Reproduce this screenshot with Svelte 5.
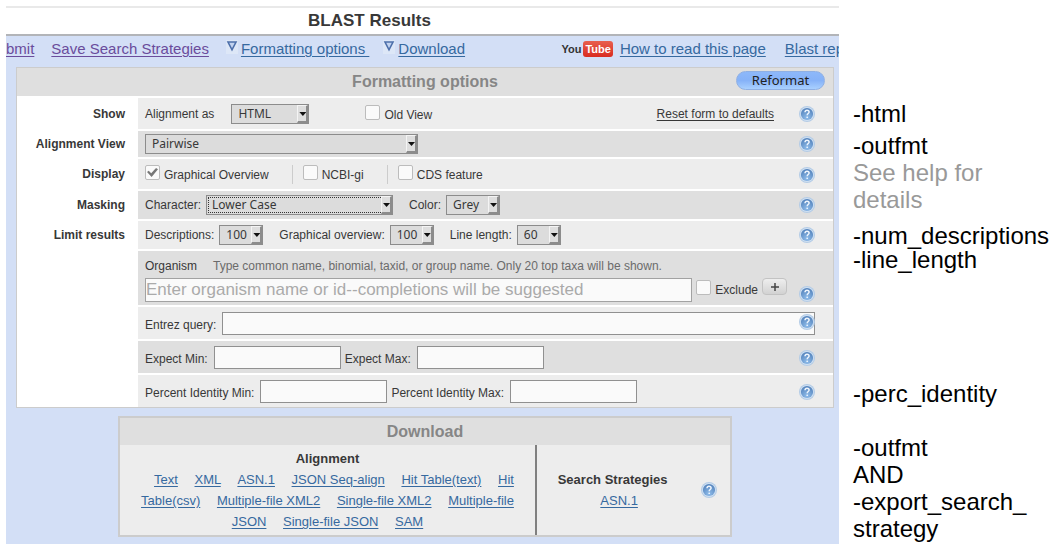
<script>
  let descriptions = $state('100');
  let overview = $state('100');
  let lineLength = $state('60');

  const alignmentFormats = ['Text', 'XML', 'ASN.1', 'JSON Seq-align', 'Hit Table(text)', 'Hit Table(csv)', 'Multiple-file XML2', 'Single-file XML2', 'Multiple-file JSON', 'Single-file JSON', 'SAM'];
</script>

{#snippet help()}
  <button type="button" class="help" aria-label="Help">
    <svg viewBox="0 0 16 16" width="16" height="16" aria-hidden="true">
      <defs>
        <radialGradient id="orb" cx="50%" cy="80%" r="75%">
          <stop offset="0" stop-color="#8fbcea" />
          <stop offset="1" stop-color="#5584bd" />
        </radialGradient>
      </defs>
      <circle cx="8" cy="8" r="8" fill="#b4cce6" />
      <circle cx="8" cy="8" r="7" fill="#cfe0f2" />
      <circle cx="8" cy="8" r="6.1" fill="url(#orb)" />
      <path d="M6 6.2C6.1 4.9 6.9 4.3 8 4.3s2.1.7 2.1 1.8c0 1.4-1.9 1.5-1.9 3.1" fill="none" stroke="#eef5fd" stroke-width="1.5" />
      <rect x="7.4" y="10.4" width="1.6" height="1.6" rx=".6" fill="#eef5fd" />
    </svg>
  </button>
{/snippet}

{#snippet arrow()}
  <svg class="arrow" viewBox="0 0 12 14" width="12" height="14" aria-hidden="true">
    <rect width="12" height="14" fill="#dde7f7" />
    <path d="M2 2h8L6 9.8z" fill="#c3d4f0" stroke="#4d70ab" stroke-width="1.6" />
  </svg>
{/snippet}

<div class="page">
  <main>
    <h1>BLAST Results</h1>
    <div class="body">
      <nav>
        <a class="visited" href="#resubmit">bmit</a>
        <a class="visited" href="#save">Save Search Strategies</a>
        <span class="toggle">{@render arrow()}<a href="#formatting">Formatting options&nbsp;</a></span>
        <span class="toggle">{@render arrow()}<a href="#download">Download</a></span>
        <span class="end">
          <span class="logo"><span>You</span><b>Tube</b></span>
          <a href="#read">How to read this page</a>
          <a class="last" href="#report">Blast rep</a>
        </span>
      </nav>

      <form class="options" onsubmit={(e) => e.preventDefault()}>
        <header>
          <h2>Formatting options</h2>
          <button class="reformat">Reformat</button>
        </header>

        <div class="label">Show</div>
        <div class="row show">
          <label for="format">Alignment as</label>
          <span class="select w-html"><select id="format"><option>HTML</option></select></span>
          <label class="check old"><input type="checkbox" /><span>Old View</span></label>
          <a class="reset" href="#reset">Reset form to defaults</a>
          {@render help()}
        </div>

        <div class="label">Alignment View</div>
        <div class="row dark view">
          <span class="select w-view"><select aria-label="Alignment View"><option>Pairwise</option></select></span>
          {@render help()}
        </div>

        <div class="label">Display</div>
        <div class="row show">
          <label class="check"><input type="checkbox" checked /><span>Graphical Overview</span></label>
          <label class="check split"><input type="checkbox" /><span>NCBI-gi</span></label>
          <label class="check split"><input type="checkbox" /><span>CDS feature</span></label>
          {@render help()}
        </div>

        <div class="label">Masking</div>
        <div class="row dark">
          <label for="mask">Character:</label>
          <span class="select focus w-mask"><select id="mask"><option>Lower Case</option></select></span>
          <label class="next" for="color">Color:</label>
          <span class="select w-color"><select id="color"><option>Grey</option></select></span>
          {@render help()}
        </div>

        <div class="label">Limit results</div>
        <div class="row">
          <label for="desc">Descriptions:</label>
          <span class="select w-num"><select id="desc" bind:value={descriptions}><option>100</option></select></span>
          <label class="next" for="over">Graphical overview:</label>
          <span class="select w-num"><select id="over" bind:value={overview}><option>100</option></select></span>
          <label class="next" for="len">Line length:</label>
          <span class="select w-num"><select id="len" bind:value={lineLength}><option>60</option></select></span>
          {@render help()}
        </div>

        <div class="row dark organism">
          <div class="hint"><label for="organism">Organism</label><span>Type common name, binomial, taxid, or group name. Only 20 top taxa will be shown.</span></div>
          <div class="entry">
            <input id="organism" type="text" placeholder="Enter organism name or id--completions will be suggested" />
            <label class="check"><input type="checkbox" /><span>Exclude</span></label>
            <button type="button" class="plus" aria-label="Add organism">
              <svg viewBox="0 0 10 10" width="10" height="10" aria-hidden="true"><path d="M5 1v8M1 5h8" stroke="#444" stroke-width="1.5" /></svg>
            </button>
            {@render help()}
          </div>
        </div>

        <div class="row field entrez">
          <label for="entrez">Entrez query:</label>
          <input id="entrez" type="text" />
          {@render help()}
        </div>

        <div class="row dark field">
          <label for="emin">Expect Min:</label>
          <input id="emin" type="text" />
          <label for="emax">Expect Max:</label>
          <input id="emax" type="text" />
          {@render help()}
        </div>

        <div class="row field">
          <label for="pmin">Percent Identity Min:</label>
          <input id="pmin" type="text" />
          <label for="pmax">Percent Identity Max:</label>
          <input id="pmax" type="text" />
          {@render help()}
        </div>
      </form>

      <section class="download">
        <h2>Download</h2>
        <div class="columns">
          <div class="formats">
            <h3>Alignment</h3>
            {#each alignmentFormats as name}<a href="#get">{name}</a>{' '}{/each}
          </div>
          <div class="strategies">
            <div>
              <h3>Search Strategies</h3>
              <a href="#strategies">ASN.1</a>
            </div>
            {@render help()}
          </div>
        </div>
      </section>
    </div>
  </main>

  <aside>
    <p>-html</p>
    <p class="outfmt">-outfmt<br /><span>See help for<br />details</span></p>
    <p class="limits">-num_descriptions<br />-line_length</p>
    <p class="identity">-perc_identity</p>
    <p class="export">-outfmt<br />AND<br />-export_search_<wbr />strategy</p>
  </aside>
</div>

<style>
  :global(body) {
    margin: 0;
    background: #fff;
  }
  .page {
    display: grid;
    grid-template-columns: minmax(0, 1fr) 205px;
    gap: 14px;
    padding-left: 6px;
    font: 12px/16px "Liberation Sans", Arial, sans-serif;
    color: #383838;
  }
  h1, h2, h3, p {
    margin: 0;
  }
  button, input, select {
    box-sizing: border-box;
    margin: 0;
    padding: 0;
    font: inherit;
    color: inherit;
  }
  a {
    color: #36699f;
    text-underline-offset: 2px;
  }
  main {
    padding-top: 6px;
    min-width: 0;
  }
  h1 {
    border-top: 2px solid #e9e9e9;
    border-bottom: 2px solid #b2b4b8;
    padding-right: 106px;
    font-size: 17px;
    line-height: 26px;
    text-align: center;
  }
  .body {
    background: #d3dff6;
    padding: 0 5px 7px 10px;
  }
  nav {
    display: flex;
    align-items: center;
    gap: 17px;
    margin: 0 -5px 0 -10px;
    padding-bottom: 5px;
    overflow: hidden;
    white-space: nowrap;
    font-size: 15px;
    line-height: 26px;
  }
  .visited {
    color: #6a4c9c;
  }
  .toggle {
    display: flex;
    gap: 3px;
  }
  .toggle + .toggle {
    margin-left: -3px;
  }
  .arrow {
    margin-top: 4px;
  }
  .end {
    display: flex;
    align-items: center;
    gap: 7px;
    margin-left: auto;
    margin-right: -5px;
  }
  .last {
    margin-left: 12px;
  }
  .logo {
    display: flex;
    align-items: center;
    gap: 2px;
    font: bold 11px/16px "Liberation Sans", sans-serif;
    color: #333;
  }
  .logo b {
    border-radius: 3px;
    padding: 0 2px;
    background: linear-gradient(#e8604f, #d92b20);
    color: #fff;
  }
  .options {
    display: grid;
    grid-template-columns: 121px minmax(0, 1fr);
    row-gap: 2px;
    border: 1px solid #ccc;
    background: #fff;
  }
  .options header {
    grid-column: 1 / -1;
    display: grid;
    align-items: center;
    background: #dfdfdf;
  }
  h2 {
    color: #868686;
    font-size: 16px;
    line-height: 28px;
    text-align: center;
  }
  header h2, .reformat {
    grid-area: 1 / 1;
  }
  .reformat {
    justify-self: end;
    width: 89px;
    margin-right: 8px;
    margin-bottom: 3px;
    border: 1px solid #8fb0e4;
    border-radius: 10px;
    background: linear-gradient(#8db8fa, #86b2f8 50%, #a9d0ff);
    color: #222;
    font: 13px/17px "Noto Sans", sans-serif;
  }
  .label {
    align-self: center;
    padding-right: 13px;
    font-weight: bold;
    text-align: right;
  }
  .row {
    grid-column: 2;
    position: relative;
    display: flex;
    align-items: center;
    gap: 5px;
    padding: 4px 18px 4px 7px;
    background: #ededed;
  }
  .dark {
    background: #dfdfdf;
  }
  .show {
    padding-top: 6px;
    padding-bottom: 5px;
  }
  .view {
    padding-top: 3px;
    padding-bottom: 3px;
  }
  .next {
    margin-left: 11px;
  }
  .help {
    display: flex;
    flex: none;
    margin-left: auto;
    border: 0;
    background: none;
  }
  .reset {
    margin-left: auto;
    margin-right: 20px;
    color: #383838;
  }
  .reset + :global(.help) {
    margin-left: 0;
  }
  .select {
    position: relative;
    display: flex;
  }
  .select::after {
    content: "";
    position: absolute;
    top: 1px;
    right: 1px;
    bottom: 1px;
    box-sizing: border-box;
    width: 11px;
    border-style: solid;
    border-width: 1px 2px 2px 1px;
    border-color: #f4f4f4 #8c8c8c #8c8c8c #f4f4f4;
    background: #dedede;
    pointer-events: none;
  }
  .select::before {
    content: "";
    position: absolute;
    z-index: 1;
    top: 8px;
    right: 3px;
    width: 7px;
    height: 4px;
    background: #111;
    clip-path: polygon(0 0, 100% 0, 50% 100%);
    pointer-events: none;
  }
  select {
    appearance: none;
    width: 100%;
    border: 1px solid #8c8c8c;
    border-radius: 0;
    padding-left: 6px;
    background: #dcdcdc;
    font: 12px/18px "Noto Sans", sans-serif;
  }
  .focus select {
    padding-left: 5px;
    outline: 1px dotted #333;
    outline-offset: -3px;
  }
  .w-html { width: 78px; margin-left: 12px; }
  .w-view { width: 273px; }
  .w-mask { width: 187px; }
  .w-color { width: 54px; }
  .w-num { width: 44px; }
  .check {
    display: flex;
    gap: 4px;
    min-height: 19px;
  }
  .check span {
    padding-top: 2px;
  }
  .old {
    margin-left: 51px;
  }
  .split {
    margin-left: 18px;
    border-left: 1px solid #ccc;
    padding-left: 10px;
  }
  [type="checkbox"] {
    appearance: none;
    flex: none;
    width: 15px;
    height: 15px;
    border: 1px solid #bcbcbc;
    border-radius: 2px;
    background: #fafafa;
  }
  [type="checkbox"]:checked::before {
    content: "";
    display: block;
    width: 11px;
    height: 9px;
    margin: 2px 1px;
    background: #777;
    clip-path: polygon(0 45%, 16% 30%, 38% 58%, 82% 0, 100% 14%, 42% 100%);
  }
  [type="text"] {
    width: 127px;
    height: 23px;
    border: 1px solid #909090;
    background: #fafafa;
  }
  .organism {
    display: block;
    padding-top: 7px;
    padding-bottom: 3px;
  }
  .hint {
    display: flex;
    gap: 16px;
    margin-bottom: 4px;
  }
  .hint span {
    color: #6b6b6b;
  }
  .entry {
    display: flex;
    gap: 4px;
  }
  .entry [type="text"] {
    flex: 1;
    min-width: 0;
    height: 24px;
    border-color: #a2a2a2;
    font-size: 17px;
  }
  .entry .check {
    padding-top: 2px;
  }
  ::placeholder {
    color: #aaa;
    opacity: 1;
  }
  .plus {
    display: flex;
    align-items: center;
    justify-content: center;
    width: 25px;
    height: 17px;
    border: 1px solid #c3c3c3;
    border-radius: 4px;
    background: linear-gradient(#eee, #d2d2d2);
  }
  .entry :global(.help) {
    align-self: flex-end;
    margin-left: 8px;
  }
  .field {
    gap: 6px;
    padding-top: 5px;
    padding-bottom: 4px;
  }
  .field label {
    padding-top: 3px;
  }
  .field label:not(:first-child) {
    margin-left: -2px;
  }
  .entrez [type="text"] {
    flex: 1;
  }
  .entrez :global(.help) {
    position: absolute;
    top: 7px;
    right: 18px;
  }
  .download {
    box-sizing: border-box;
    width: 75%;
    margin: 8px auto 0;
    border: 2px solid #ccc;
    background: #ededed;
    font-size: 13px;
    line-height: 21px;
    text-align: center;
  }
  .download h2 {
    background: #dfdfdf;
    line-height: 27px;
  }
  h3 {
    font-size: 13px;
  }
  .columns {
    display: grid;
    grid-template-columns: 68% 1fr;
  }
  .formats {
    padding: 3px 12px;
  }
  .formats a, .strategies a {
    margin-left: 13px;
  }
  .strategies {
    display: flex;
    align-items: center;
    border-left: 2px solid #808080;
    padding: 0 13px 0 21px;
  }
  aside {
    padding-top: 100px;
    font-size: 24px;
    line-height: 27px;
    color: #000;
  }
  .outfmt {
    margin-top: 5px;
  }
  .outfmt span {
    color: #999;
  }
  .limits {
    margin-top: 11px;
    line-height: 24px;
  }
  .identity {
    margin-top: 108px;
  }
  .export {
    margin-top: 27px;
  }
</style>
